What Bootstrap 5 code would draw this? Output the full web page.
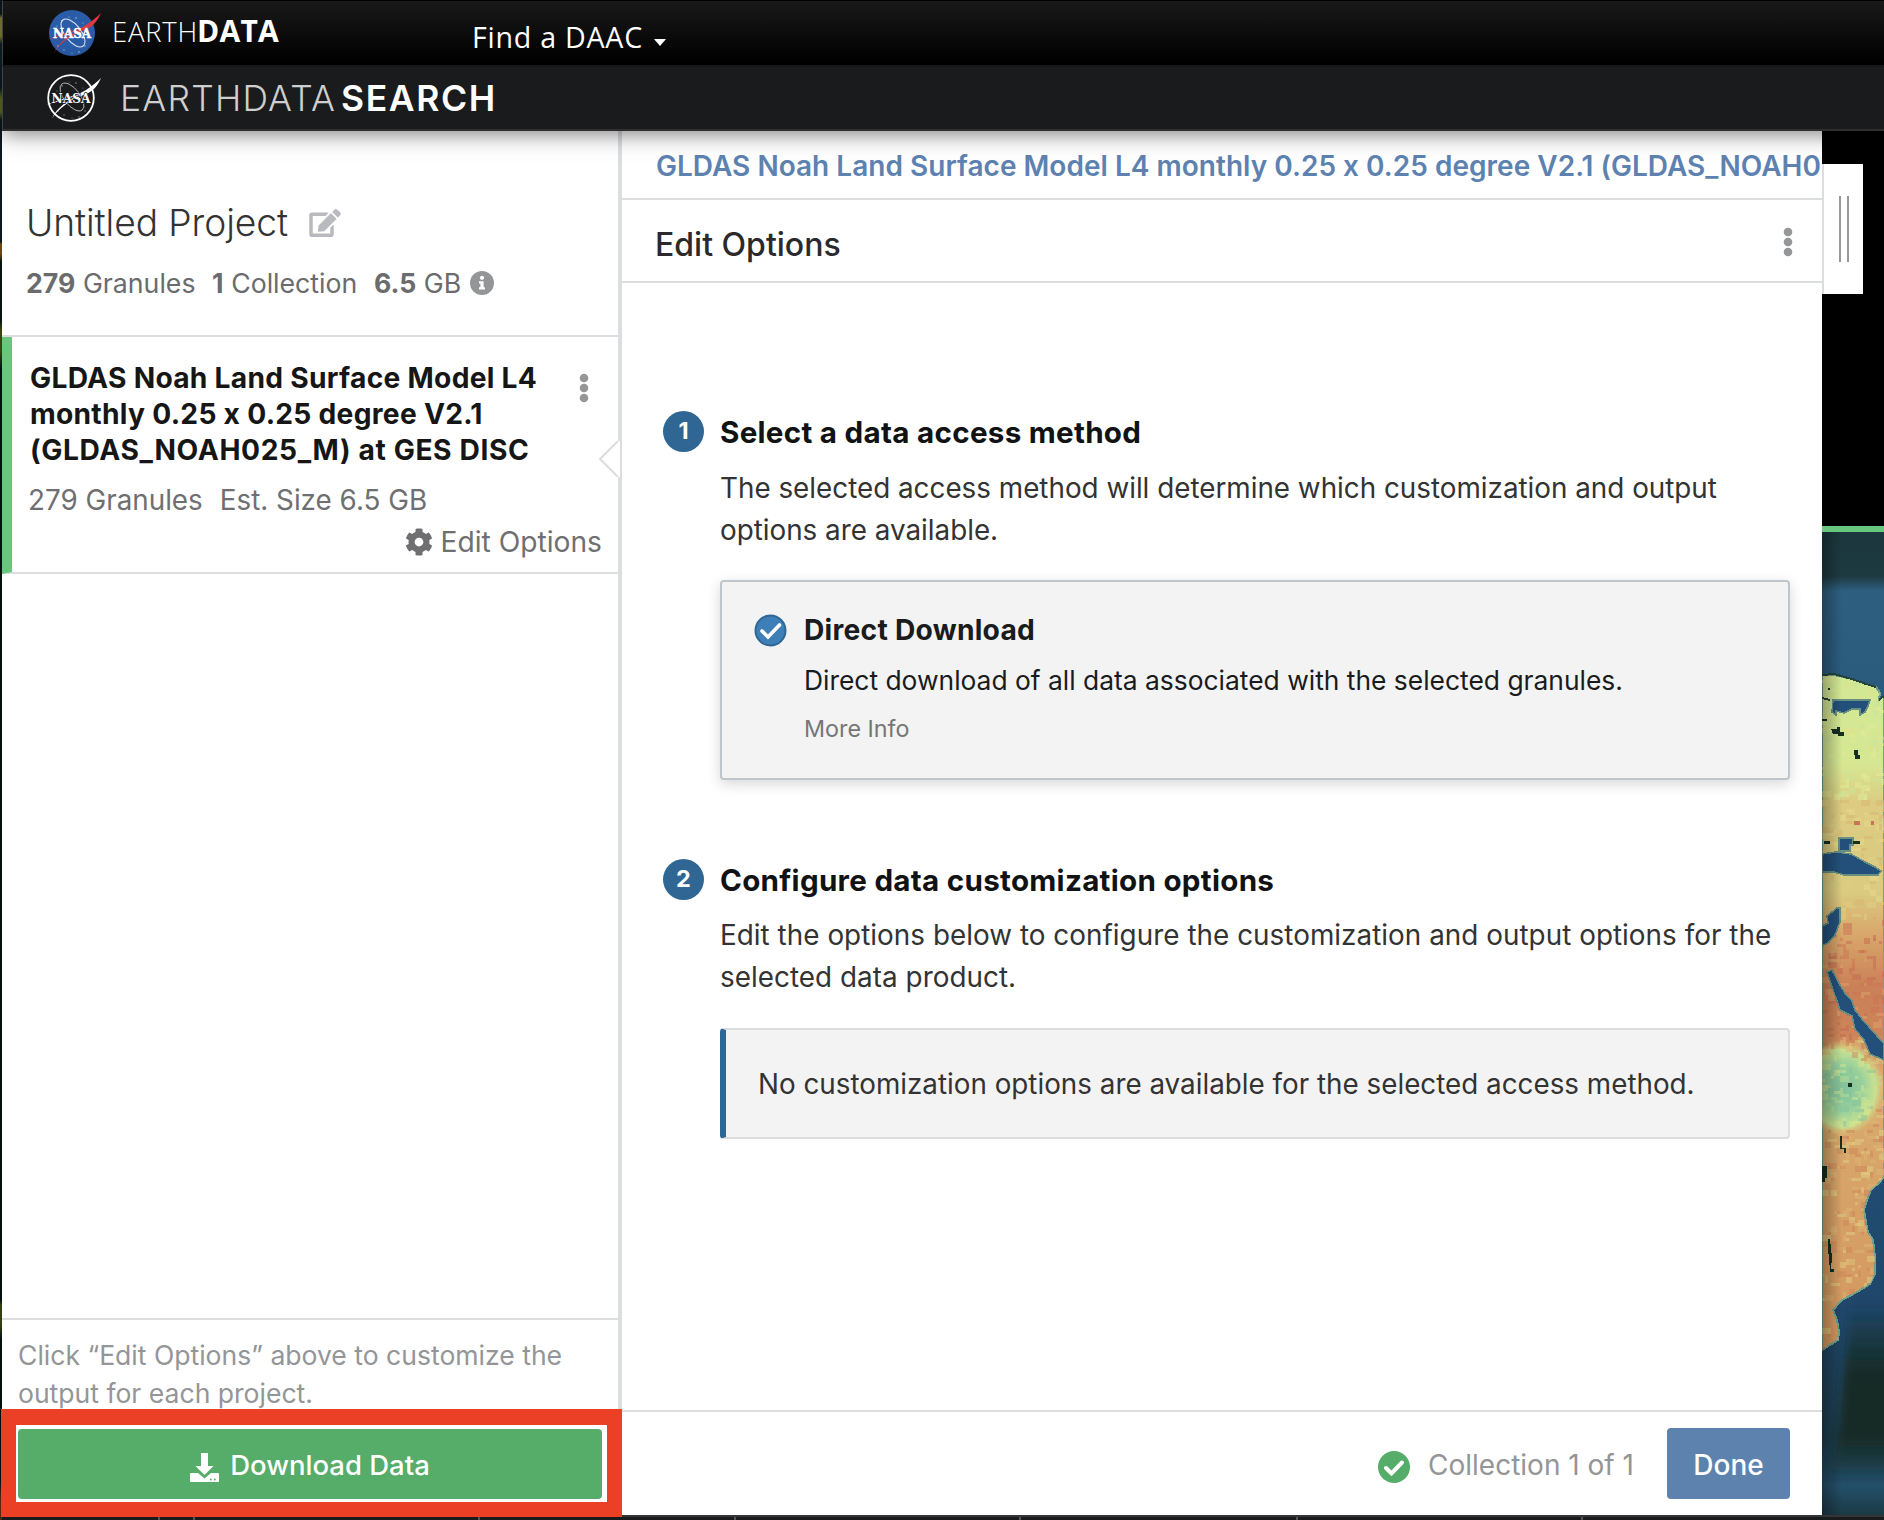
<!DOCTYPE html>
<html lang="en">
<head>
<meta charset="utf-8">
<title>Earthdata Search - Untitled Project</title>
<meta name="viewport" content="width=device-width, initial-scale=1">
<link href="https://cdn.jsdelivr.net/npm/bootstrap@5.3.0/dist/css/bootstrap.min.css" rel="stylesheet">
<style>
  body { font-family: Inter, "Liberation Sans", sans-serif; font-size: 28px; color: #333; background: #000; overflow: hidden; font-feature-settings: "calt" 0; }
  svg { display: block; flex: none; }
  h1, h2, h3, p { margin: 0; }
  .map-edge { width: 2px; background: linear-gradient(#0a1518 0 14px, #6a6d2c 18px 36px, #0c1d20 44px 88px, #66702c 98px 112px, #0a1a1c 120px 242px, #6d4711 244px 254px, #06130f 262px 320px, #3a4410 330px 350px, #03100d 370px 1300px, #343f14 1305px 1325px, #03100d 1340px 1480px, #5a2412 1500px); }
  .tophat { height: 65px; border-top: 1px solid #000; border-left: 1px solid #444; background: linear-gradient(#191919, #000); font-family: "Open Sans", sans-serif; color: #fff; padding-left: 42px; }
  .tophat-brand { font-size: 27.4px; line-height: 30px; font-weight: 300; margin: 15px 0 0 9px; width: 360px; letter-spacing: .8px; }
  .tophat-brand b { font-weight: 700; font-size: 30px; margin-left: -1px; line-height: 1; letter-spacing: .3px; }
  .daac { font-size: 28.6px; line-height: 36px; margin-top: 18px; letter-spacing: .75px; }
  .daac-caret { border: 6.5px solid transparent; border-top: 7px solid #fff; border-bottom: 0; margin: 38px 0 0 11px; height: 7px; }
  .searchbar { height: 66px; background: #1a1b1d; border-top: 2px solid #161719; border-bottom: 2px solid #2f2e31; border-left: 1px solid #444; padding-left: 42px; box-shadow: 0 3px 20px rgba(0,0,0,.5); z-index: 3; }
  .search-brand { font-size: 35.5px; line-height: 40px; font-weight: 300; color: #cfcfcf; margin: 12px 0 0 17px; letter-spacing: 1.2px; }
  .search-brand b { font-weight: 600; color: #fff; margin-left: 5px; letter-spacing: 1.6px; }
  .sidebar { width: 620px; border-right: 4px solid #dcdddf; background: #fff; flex: none; }
  .proj-head { height: 206px; border-bottom: 2px solid #dcdddf; padding: 67px 0 0 24px; }
  .proj-title { font-size: 37.2px; line-height: 50px; font-weight: 350; color: #333; letter-spacing: -.1px; }
  .edit-icon { margin-left: 21px; }
  .proj-stats { line-height: 36px; font-size: 26.7px; margin-top: 17px; color: #6b6b6d; gap: 16.6px; }
  .proj-stats b { font-weight: 700; }
  .info-dot { margin: -1px 0 0 -8px; }
  .proj-item { height: 237px; border-left: 10px solid #67c77c; border-bottom: 2px solid #dcdddf; padding: 23px 17px 0 18px; }
  .item-title { font-size: 28.2px; line-height: 36px; font-weight: 700; color: #161616; white-space: nowrap; letter-spacing: .27px; }
  .item-title .code-name { letter-spacing: .6px; }
  .item-kebab { margin: 13px 12px 0 0; }
  .item-meta { font-size: 27.8px; line-height: 36px; color: #6f6f71; margin: 14px 0 0 -2px; gap: 17px; }
  .item-edit { font-size: 28.2px; line-height: 36px; color: #6f6f71; margin: 6px -1px 0 0; }
  .pointer-arrow { position: absolute; left: 598px; top: 441px; width: 22px; height: 36px; z-index: 2; }
  .side-note { height: 197px; border-top: 2px solid #dcdddf; padding: 16px 16px 0; font-size: 26.55px; line-height: 38px; color: #949597; }
  .btn-dl { width: 584px; height: 70px; border-radius: 4px; background: #56ac69; color: #fff; border: 0; font-weight: 500; font-size: 27.5px; margin-top: 17px; gap: 11px; padding: 3px 0 0; }
  .callout-ring { position: absolute; left: 1px; top: 1409px; width: 621px; height: 108px; border: solid #ec4026; border-width: 16px 15px 15px; z-index: 5; }
  .detail { width: 1200px; background: #fff; flex: none; }
  .detail-link { height: 69px; border-bottom: 2px solid #dcdddf; padding-left: 34px; font-size: 28px; font-weight: 600; line-height: 70px; color: #5e82b0; white-space: nowrap; overflow: hidden; letter-spacing: .02px; }
  .detail-head { height: 83px; border-bottom: 2px solid #dcdddf; padding: 2px 29px 0 33px; font-size: 32px; font-weight: 500; color: #2a2a2c; }
  .detail-head span { padding-top: 6px; }
  .step-one { margin-top: 128px; }
  .step-two { margin-top: 79px; }
  .step-num { width: 41px; height: 41px; border-radius: 50%; background: #2f6693; color: #fff; font-size: 23.5px; font-weight: 700; margin: 0 16px 0 41px; padding-bottom: 1px; flex: none; }
  .step-title { font-size: 29.6px; line-height: 42px; font-weight: 700; color: #111214; letter-spacing: .28px; }
  .step-text { font-size: 27.85px; line-height: 42px; margin-top: 13px; white-space: nowrap; letter-spacing: .03px; }
  .step-one .step-text { margin-top: 14px; letter-spacing: -.02px; }
  .method { width: 1070px; height: 200px; border: 2px solid #c0c5c9; border-radius: 4px; background: #f3f3f3; box-shadow: 0 4px 14px rgba(0,0,0,.16); color: #1a1b1d; margin-top: 29px; padding: 30px 0 0 33px; gap: 16px; }
  .method svg { margin: 2px 1px 0 -1px; }
  .method-title { font-size: 28.2px; line-height: 36px; font-weight: 700; letter-spacing: .25px; }
  .method-desc { font-size: 26.4px; line-height: 36px; margin-top: 14px; white-space: nowrap; }
  .method-more { font-size: 23.3px; line-height: 30px; margin-top: 16px; color: #757678; }
  .no-opts { width: 1070px; height: 111px; border: 2px solid #dcdddf; border-left: 6px solid #2f6693; border-radius: 4px; background: #f3f3f3; font-size: 27.8px; padding: 2px 0 0 32px; margin-top: 30px; white-space: nowrap; }
  .detail-foot { height: 105px; border-top: 2px solid #dcdddf; padding: 16px 32px 0 0; }
  .foot-state { height: 73px; }
  .foot-count { font-size: 28px; color: #949597; margin: 0 33px 0 18px; }
  .btn-done { width: 123px; height: 71px; border-radius: 4px; background: #5e82ae; color: #fff; font-size: 28px; font-weight: 500; border: 0; padding: 2px 0 0; }
  .map-pane { width: 62px; background: #000; flex: none; }
  .map-track { height: 6px; background: #67c77c; margin-top: 395px; }
  .drag-handle { position: absolute; left: 1822px; top: 164px; width: 41px; height: 130px; background: #fff; border-left: 2px solid #dcdddf; z-index: 2; gap: 6px; padding-bottom: 1px; }
  .drag-handle span { width: 2px; height: 66px; background: #98999b; }
  .timeline-bar { height: 5px; background: #1a1b1d; border-top: 2px solid #353537; padding-left: 156px; }
  .timeline-bar span { width: 2px; height: 3px; background: #555; }
</style>
<script src="https://cdn.jsdelivr.net/npm/bootstrap@5.3.0/dist/js/bootstrap.bundle.min.js"></script>
</head>
<body>
<svg width="0" height="0" class="position-absolute">
  <defs>
    <g id="kebab" fill="#959698"><circle cx="5" cy="5" r="4.3"/><circle cx="5" cy="15" r="4.3"/><circle cx="5" cy="25" r="4.3"/></g>
    <g id="stars"><circle cx="17" cy="12" r=".8"/><circle cx="31" cy="9" r=".8"/><circle cx="38" cy="14" r=".6"/><circle cx="13" cy="37" r=".8"/><circle cx="19" cy="41" r=".7"/><circle cx="34" cy="43" r=".8"/><circle cx="40" cy="37" r=".7"/><circle cx="24" cy="8" r=".6"/><circle cx="27" cy="44" r=".6"/><circle cx="12" cy="17" r=".6"/></g>
  </defs>
</svg>
<div class="d-flex vh-100">
  <div class="map-edge"></div>
  <div class="d-flex flex-column flex-grow-1">
    <nav class="tophat d-flex align-items-start">
      <svg class="mt-2" width="58" height="50" viewBox="0 0 58 50">
        <circle cx="27" cy="24" r="23" fill="#2a5ca8"/>
        <use href="#stars" fill="#a9c0e4"/>
        <ellipse cx="28" cy="24" rx="8" ry="16.5" fill="none" stroke="#dfe8f5" stroke-width="1" transform="rotate(-38 28 24)"/>
        <path d="M2 31 C17 24 32 22 41 16 C47 12 52 8 56 4 C53 11 48 18 40 21 C26 25 14 35 8.500 44.500 C14 33 24 26 35 20.500 C24 25 11 28 2 31Z" fill="#dd3a3f"/>
        <text x="27" y="28.800" text-anchor="middle" font-family="DejaVu Serif, serif" font-weight="700" font-size="13" textLength="38" lengthAdjust="spacingAndGlyphs" fill="#fff" stroke="#fff" stroke-width=".5">NASA</text>
      </svg>
      <div class="tophat-brand">EARTH<b>DATA</b></div>
      <div class="daac">Find a DAAC</div><span class="daac-caret"></span>
    </nav>
    <header class="searchbar d-flex align-items-start position-relative">
      <svg class="mt-1" width="58" height="54" viewBox="0 0 58 54">
        <circle cx="26" cy="27" r="22.800" fill="none" stroke="#fff" stroke-width="1.800"/>
        <use href="#stars" y="3" fill="#8b8c8e"/>
        <ellipse cx="27" cy="26" rx="8" ry="16.500" fill="none" stroke="#c9c9c9" stroke-width=".8" transform="rotate(-38 27 26)"/>
        <path d="M1 34 C17 27 32 25 41 19 C47 15 52 11 56 7 C53 14 48 21 40 23.500 C26 28 13 38 7 47.500 C12 36 24 28.500 35 23.500 C24 28 11 31 1 34Z" fill="#fff"/>
        <text x="26" y="32" text-anchor="middle" font-family="DejaVu Serif, serif" font-weight="700" font-size="13" textLength="39" lengthAdjust="spacingAndGlyphs" fill="#fff" stroke="#1a1b1d" stroke-width="1.400" paint-order="stroke">NASA</text>
      </svg>
      <div class="search-brand">EARTHDATA<b>SEARCH</b></div>
    </header>
    <div class="d-flex flex-grow-1">
      <aside class="sidebar d-flex flex-column">
        <div class="proj-head">
          <div class="d-flex align-items-center">
            <h1 class="proj-title">Untitled Project</h1>
            <svg class="edit-icon" width="32" height="28" viewBox="0 0 576 512" fill="#b9babd"><path d="M402.600 83.200l90.200 90.200c3.800 3.800 3.800 10 0 13.800L274.400 405.600l-92.800 10.300c-12.400 1.400-22.900-9.100-21.500-21.500l10.300-92.800L388.800 83.200c3.800-3.800 10-3.800 13.800 0zm162-22.900l-48.800-48.800c-15.200-15.200-39.900-15.200-55.200 0l-35.400 35.400c-3.800 3.800-3.800 10 0 13.800l90.200 90.200c3.800 3.800 10 3.800 13.800 0l35.400-35.400c15.200-15.300 15.200-40 0-55.200zM384 346.200V448H64V128h229.800c3.200 0 6.200-1.300 8.500-3.500l40-40c7.600-7.600 2.200-20.500-8.500-20.500H48C21.500 64 0 85.500 0 112v352c0 26.500 21.500 48 48 48h352c26.500 0 48-21.500 48-48V306.200c0-10.700-12.900-16-20.500-8.500l-40 40c-2.200 2.300-3.500 5.300-3.500 8.500z"/></svg>
          </div>
          <div class="proj-stats d-flex align-items-center">
            <span><b>279</b> Granules</span><span><b>1</b> Collection</span><span><b>6.5</b> GB</span>
            <svg class="info-dot" width="24" height="24" viewBox="0 0 24 24"><circle cx="12" cy="12" r="12" fill="#949597"/><circle cx="12" cy="6.800" r="2.100" fill="#fff"/><path d="M9 10.300h4.600v6h1.400v2.200H9v-2.200h1.400v-3.800H9z" fill="#fff"/></svg>
          </div>
        </div>
        <section class="proj-item">
          <div class="d-flex justify-content-between">
            <h2 class="item-title">GLDAS Noah Land Surface Model L4<br>monthly 0.25 x 0.25 degree V2.1<br><span class="code-name">(GLDAS_NOAH025_M) at GES DISC</span></h2>
            <svg class="item-kebab" width="10" height="30"><use href="#kebab"/></svg>
          </div>
          <div class="item-meta d-flex"><span>279 Granules</span><span>Est. Size 6.5 GB</span></div>
          <div class="item-edit d-flex justify-content-end align-items-center gap-2">
            <svg width="28" height="28" viewBox="0 0 512 512" fill="#6f6f71"><path d="M487.400 315.700l-42.600-24.600c4.300-23.200 4.300-47 0-70.200l42.600-24.600c4.900-2.800 7.100-8.600 5.500-14-11.100-35.600-30-67.800-54.700-94.600-3.800-4.100-10-5.100-14.800-2.300L380.800 110c-17.900-15.400-38.500-27.300-60.800-35.100V25.800c0-5.600-3.900-10.500-9.400-11.700-36.700-8.200-74.300-7.800-109.200 0-5.500 1.200-9.400 6.100-9.400 11.700V75c-22.200 7.900-42.800 19.800-60.800 35.100L88.700 85.500c-4.900-2.800-11-1.900-14.800 2.300-24.700 26.700-43.600 58.900-54.700 94.600-1.700 5.400.6 11.200 5.500 14L67.300 221c-4.300 23.200-4.300 47 0 70.200l-42.600 24.600c-4.900 2.800-7.100 8.600-5.500 14 11.100 35.600 30 67.800 54.700 94.600 3.800 4.100 10 5.100 14.800 2.300l42.600-24.600c17.900 15.400 38.500 27.300 60.800 35.100v49.200c0 5.600 3.900 10.500 9.400 11.700 36.700 8.200 74.300 7.800 109.200 0 5.500-1.200 9.400-6.100 9.400-11.700v-49.200c22.200-7.900 42.800-19.800 60.800-35.100l42.600 24.600c4.900 2.800 11 1.900 14.800-2.300 24.700-26.700 43.600-58.900 54.700-94.600 1.500-5.500-.7-11.300-5.600-14.100zM256 336c-44.100 0-80-35.900-80-80s35.900-80 80-80 80 35.900 80 80-35.900 80-80 80z"/></svg>
            <span>Edit Options</span>
          </div>
        </section>
        <div class="side-note mt-auto">
          <p>Click “Edit Options” above to customize the<br>output for each project.</p>
          <button class="btn btn-dl d-flex align-items-center justify-content-center">
            <svg class="mt-1" width="29" height="29" viewBox="0 0 29 29" fill="#fff"><path d="M11 0h7v13h5.500L14.500 22 5.500 13H11z"/><path d="M1.200 20H8l6.500 5.500L21 20h6.800c.7 0 1.200.5 1.200 1.200V28c0 .6-.4 1-1 1H1c-.6 0-1-.4-1-1v-6.800C0 20.500.5 20 1.200 20z"/><circle cx="20.800" cy="26.500" r="1" fill="#56ac69"/><circle cx="24.800" cy="26.500" r="1" fill="#56ac69"/></svg>
            <span>Download Data</span>
          </button>
        </div>
      </aside>
      <main class="detail d-flex flex-column">
        <div class="detail-link">GLDAS Noah Land Surface Model L4 monthly 0.25 x 0.25 degree V2.1 (GLDAS_NOAH0</div>
        <div class="detail-head d-flex align-items-center justify-content-between"><span>Edit Options</span><svg width="10" height="30"><use href="#kebab"/></svg></div>
        <section class="step-one d-flex">
          <span class="step-num d-flex align-items-center justify-content-center">1</span>
          <div>
            <h2 class="step-title">Select a data access method</h2>
            <p class="step-text">The selected access method will determine which customization and output<br>options are available.</p>
            <div class="method d-flex">
              <svg width="33" height="33" viewBox="0 0 33 33"><circle cx="16.500" cy="16.500" r="15" fill="#3f7fb8" stroke="#2f6693" stroke-width="2"/><path d="M8 17l6 6 11.500-12" fill="none" stroke="#fff" stroke-width="3.600" stroke-linecap="round"/></svg>
              <div>
                <h3 class="method-title">Direct Download</h3>
                <p class="method-desc">Direct download of all data associated with the selected granules.</p>
                <div class="method-more">More Info</div>
              </div>
            </div>
          </div>
        </section>
        <section class="step-two d-flex">
          <span class="step-num d-flex align-items-center justify-content-center">2</span>
          <div>
            <h2 class="step-title">Configure data customization options</h2>
            <p class="step-text">Edit the options below to configure the customization and output options for the<br>selected data product.</p>
            <div class="no-opts d-flex align-items-center">No customization options are available for the selected access method.</div>
          </div>
        </section>
        <footer class="detail-foot mt-auto d-flex justify-content-end">
          <div class="foot-state d-flex align-items-center">
            <svg class="mt-1" width="32" height="32" viewBox="0 0 32 32"><circle cx="16" cy="16" r="16" fill="#56ac69"/><path d="M8 17l5.500 5.500L24 11.500" fill="none" stroke="#fff" stroke-width="4" stroke-linecap="round"/></svg>
            <span class="foot-count">Collection 1 of 1</span>
          </div>
          <button class="btn btn-done">Done</button>
        </footer>
      </main>
      <div class="map-pane">
        <div class="map-track"></div>
        <svg id="map" width="62" height="983" viewBox="0 0 62 983" shape-rendering="crispEdges">
          <defs>
            <linearGradient id="land" gradientUnits="userSpaceOnUse" x1="0" y1="143" x2="0" y2="820">
              <stop offset="0" stop-color="#d3e894"/><stop offset=".13" stop-color="#d6e792"/><stop offset=".19" stop-color="#dccb80"/><stop offset=".32" stop-color="#dacb80"/><stop offset=".38" stop-color="#d8a96c"/><stop offset=".46" stop-color="#cb8057"/><stop offset=".53" stop-color="#cd8458"/><stop offset=".6" stop-color="#d8b272"/><stop offset=".68" stop-color="#d8a76a"/><stop offset="1" stop-color="#d3965e"/>
            </linearGradient>
            <linearGradient id="sea" x1="0" y1="0" x2="0" y2="1"><stop offset="0" stop-color="#1c373e"/><stop offset=".045" stop-color="#1e3a41"/><stop offset=".06" stop-color="#2e5f80"/><stop offset=".16" stop-color="#2a5b7e"/><stop offset=".5" stop-color="#22507a"/><stop offset=".8" stop-color="#20476a"/><stop offset=".92" stop-color="#1d3d4d"/><stop offset=".97" stop-color="#24506b"/><stop offset="1" stop-color="#1b3a44"/></linearGradient>
            <radialGradient id="wet"><stop offset="0" stop-color="#7fbf9a"/><stop offset=".5" stop-color="#98d09c"/><stop offset=".8" stop-color="#c9e190"/><stop offset="1" stop-color="#d8cf80" stop-opacity="0"/></radialGradient>
            <linearGradient id="shade"><stop offset="0" stop-opacity=".3"/><stop offset="1" stop-opacity="0"/></linearGradient>
            <linearGradient id="deep" x1="0" y1="0" x2="0" y2="1"><stop offset="0" stop-color="#152c27" stop-opacity="0"/><stop offset=".4" stop-color="#152c27"/><stop offset=".75" stop-color="#152c27"/><stop offset="1" stop-color="#152c27" stop-opacity="0"/></linearGradient>
            <filter id="soft" x="-1" y="-.5" width="3" height="2"><feGaussianBlur stdDeviation="4"/></filter>
            <path id="coast" d="M0 143h12l18 4 14 5 10 3 4 6-1 7 5-4v481l-4 5-9 8-4 10-3 10 2 12 2 10 5 8 2 17v17l-5 10-13 8-15 8-9 10 4 10 2 12-1 8-8 5-8 5z"/>
            <clipPath id="landclip"><use href="#coast"/></clipPath>
          </defs>
          <rect width="62" height="983" fill="url(#sea)"/>
          <path d="M28 770h60v180H6l12-55z" fill="url(#deep)" filter="url(#soft)"/>
          <use href="#coast" fill="url(#land)" stroke="#6fa08c" stroke-width="2"/>
          <g clip-path="url(#landclip)">
            <ellipse cx="20" cy="556" rx="42" ry="48" fill="url(#wet)"/>
            <g id="cells"></g>
          </g>
          <path d="M11 168h37l-2 6-3 6-5 3v-6h-8l-8 4-8-2v4l-4-3z M17 306h14v7h-3v6H17z M0 322l14-2 15 2 14 8 10 5 6 4-3 4H22l-10-3H0z M5 384l10-8h3v14l-5 13-6 7-7 4v-20l6-3z M5 440l5-2 8 15 5 8 7 8 3 9 7 9 22 25v16l-14-6-6-14-9-11-3-13-12-6z" fill="#23507a" stroke="#688f82" stroke-width="1.500"/>
          <path d="M0 143l12-1 18 5 14 5 10 3M0 166l8 2M57 168l5-4" fill="none" stroke="#24433d" stroke-width="2"/>
          <path d="M9 197h6v-2h3v5h4v4h-6v-2h-5zM32 218h4v5h2v4h-5zM0 187h5v2H0zM2 309h6v3H2zM31 309h7v3h-7zM6 156h2v2H6zM26 551h4v4h-4zM18 604h2v12h4v5h-2v-4h-4zM0 634h5v12H3v4H0zM6 707h2l2 18-1 12h3v3H8l-1-14-1-8z" fill="#152f20"/>
          <path d="M32 289h6v4h-6zM49 289h3v4h-3z" fill="#c87556"/>
          <rect width="20" height="983" fill="url(#shade)"/>
        </svg>
      </div>
    </div>
    <div class="timeline-bar d-flex"><span></span><span style="margin-left:33px"></span><span style="margin-left:283px"></span><span style="margin-left:254px"></span><span style="margin-left:283px"></span><span style="margin-left:275px"></span><span style="margin-left:283px"></span></div>
  </div>
</div>
<svg class="pointer-arrow" viewBox="0 0 22 36"><path d="M20 0L2 18l18 18h2V0z" fill="#fff"/><path d="M20 0L2 18l18 18" fill="none" stroke="#dcdddf" stroke-width="2"/></svg>
<div class="drag-handle d-flex align-items-center justify-content-center"><span></span><span></span></div>
<div class="callout-ring"></div>
<script>
  // Raster cells of the land layer, coloured from the data ramp.
  const cells = document.getElementById('cells');
  const ramp = [['#e2ec95', '#c8e69a', '#dde28c'], ['#e0cf83', '#d7b56e', '#e6dc8c'], ['#c97452', '#dba468', '#c4694f'], ['#dcb673', '#cd8457', '#dfcf82'], ['#b9dd94', '#86c49c', '#d3e690']];
  let seed = 7;
  const rnd = () => (seed = (seed * 16807) % 2147483647) / 2147483647;
  for (let i = 0; i < 620; i++) {
    const x = Math.floor(rnd() * 21) * 3, y = 145 + Math.floor(rnd() * 225) * 3;
    const wet = Math.hypot(x - 18, y - 556) < 36;
    const band = wet ? 4 : y < 265 ? 0 : y < 385 ? 1 : y < 505 ? 2 : 3;
    const r = document.createElementNS('http://www.w3.org/2000/svg', 'rect');
    r.setAttribute('x', x); r.setAttribute('y', y);
    r.setAttribute('width', 3 + Math.floor(rnd() * 3) * 3); r.setAttribute('height', 3 + Math.floor(rnd() * 2) * 3);
    r.setAttribute('fill', ramp[band][Math.floor(rnd() * 3)]); r.setAttribute('opacity', .5);
    cells.appendChild(r);
  }
</script>
</body>
</html>
